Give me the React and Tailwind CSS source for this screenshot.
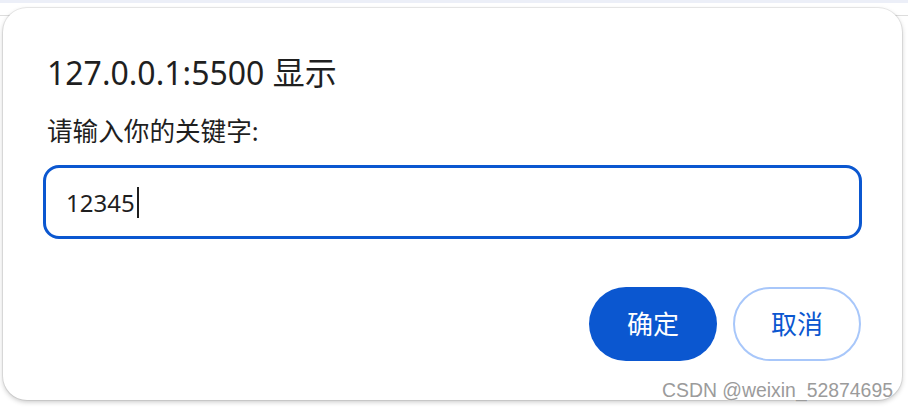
export default function App() {
  const font = { fontFamily: '"Noto Sans", "Noto Sans CJK SC", sans-serif' };
  return (
    <div className="relative w-[908px] h-[409px] bg-white overflow-hidden" style={font}>
      <div className="h-[3px] bg-[#eceff8]" />
      <div className="mt-[12px] h-px bg-[#dddddd]" />

      <div className="absolute left-[3px] top-[8px] w-[899px] h-[392px] rounded-[24px] bg-white shadow-[0_0_0_1px_rgba(0,0,0,0.07),0_2px_5px_rgba(0,0,0,0.22)] flex flex-col px-[40px]">
        <div className="mt-[48px] pl-[4px] text-[32px] leading-[33px] text-[#1f1f1f] whitespace-nowrap">
          127.0.0.1:5500 显示
        </div>
        <div className="mt-[30px] pl-[4px] text-[25.6px] leading-[25px] text-[#1f1f1f] whitespace-nowrap">
          请输入你的关键字:
        </div>
        <div className="mt-[21px] h-[74px] rounded-[16px] border-[3px] border-[#0b57d0] flex items-center pl-[20px]">
          <span className="text-[24px] leading-[25px] text-[#1f1f1f]">12345</span>
          <span className="ml-[2px] w-[2px] h-[31px] bg-[#1f1f1f]" />
        </div>
        <div className="mt-[48px] flex justify-end gap-[16px] pr-[1px]">
          <div className="w-[128px] h-[74px] rounded-full bg-[#0b57d0] text-white text-[26px] flex items-center justify-center">
            确定
          </div>
          <div className="w-[128px] h-[74px] rounded-full border-2 border-[#a8c7fa] text-[#0b57d0] text-[26px] flex items-center justify-center">
            取消
          </div>
        </div>
      </div>

      <div
        className="absolute left-[662px] top-[379px] text-[19.4px] leading-[22px] text-[#9b9b9b] whitespace-nowrap [text-shadow:0_0_2px_#ffffff]"
        style={{ fontFamily: '"Liberation Sans", Arial, sans-serif' }}
      >
        CSDN @weixin_52874695
      </div>
    </div>
  );
}
